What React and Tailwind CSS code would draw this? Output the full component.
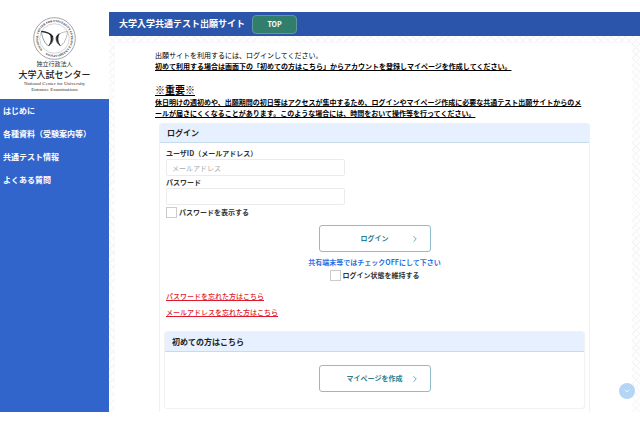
import React, { useState } from 'react';
import { ChevronDown, ChevronRight } from 'lucide-react';

const navItems = ['はじめに', '各種資料（受験案内等）', '共通テスト情報', 'よくある質問'];

const Emblem = () => (
  <svg viewBox="0 0 128 128" className="w-[43px] h-[43px]" role="img" aria-label="大学入試センター">
    <defs>
      <path id="ring" d="M 29 98 A 49 49 0 1 1 30 99" />
    </defs>
    <circle cx="64" cy="64" r="62" fill="none" stroke="#777" strokeWidth="2" />
    <circle cx="64" cy="64" r="44" fill="none" stroke="#aaa" strokeWidth="1.5" />
    <text fontFamily="Liberation Serif, serif" fontSize="9" fontWeight="700" fill="#222">
      <textPath href="#ring">NATIONAL CENTER FOR UNIVERSITY ENTRANCE EXAMINATIONS</textPath>
    </text>
    <path d="M25 43 C42 45 56 52 60 63 C60 74 54 84 46 85 C36 82 27 62 25 43 Z" fill="none" stroke="#666" strokeWidth="2" />
    <path d="M25 43 C42 45 54 51 59 60" fill="none" stroke="#222" strokeWidth="4" />
    <path d="M50 50 C61 55 63 72 47 85 C55 74 56 62 50 50 Z" fill="#222" stroke="#222" strokeWidth="2" />
    <path d="M103 43 C86 45 72 52 68 63 C68 74 74 84 82 85 C92 82 101 62 103 43 Z" fill="none" stroke="#999" strokeWidth="2" />
    <path d="M78 50 C67 55 65 72 81 85 C73 74 72 62 78 50 Z" fill="#222" stroke="#222" strokeWidth="2" />
  </svg>
);

const Sidebar = () => (
  <aside className="w-[109px] shrink-0 flex flex-col">
    <div className="flex flex-col items-center h-[87px] pt-[5px] text-[#333]">
      <Emblem />
      <p className="text-[6px] leading-[8px]">独立行政法人</p>
      <p className="text-[9px] leading-[13px] font-medium text-[#222]">大学入試センター</p>
      <p className="font-['Liberation_Serif',serif] text-[5px] leading-[6px] text-center">
        National Center for University
        <br />
        Entrance Examinations
      </p>
    </div>
    <nav className="grow bg-[#3265cc] px-[3px]">
      {navItems.map((item) => (
        <a key={item} href="#" className="block text-[8px] leading-[23px] font-bold text-white">
          {item}
        </a>
      ))}
    </nav>
  </aside>
);

const CardHeading = ({ children }) => (
  <h2 className="h-5 rounded-t-[3px] border-b border-[#c8dbea] bg-[#e6f0fe] px-[7px] text-[8px] leading-[19px] font-bold text-[#222]">
    {children}
  </h2>
);

const ActionButton = ({ children }) => (
  <button
    type="button"
    className="relative mx-auto flex w-[112px] h-[27px] items-center justify-center rounded-[3px] border border-[#8fbccb] bg-white text-[7px] font-bold text-[#2b7f8c]"
  >
    {children}
    <ChevronRight className="absolute right-[10px] w-[10px] h-[10px] text-[#4d9aa5]" strokeWidth={2} />
  </button>
);

const inputStyle =
  'block w-[179px] h-[17px] rounded-[2px] border border-[#ebebeb] bg-white px-[5px] text-[7px] font-normal text-[#333] placeholder:text-[#aaa] outline-none';
const checkStyle = 'appearance-none w-[11px] h-[11px] border border-[#ccc] bg-white checked:bg-[#3265cc]';

const LoginCard = () => {
  const [showPassword, setShowPassword] = useState(false);

  return (
    <section className="ml-1 rounded-t-[3px] border-x border-[#f1f1f1] text-[7px] leading-[11px] font-bold text-[#333]">
      <CardHeading>ログイン</CardHeading>
      <div className="px-[6px] pt-[5px]">
        <label htmlFor="user-id" className="block">ユーザID（メールアドレス）</label>
        <input id="user-id" type="text" placeholder="メールアドレス" className={inputStyle} />
        <label htmlFor="password" className="block mt-px">パスワード</label>
        <input id="password" type={showPassword ? 'text' : 'password'} className={inputStyle} />
        <label className="mt-[2px] flex items-center gap-[2px]">
          <input
            type="checkbox"
            checked={showPassword}
            onChange={(e) => setShowPassword(e.target.checked)}
            className={checkStyle}
          />
          パスワードを表示する
        </label>
        <div className="mt-[7px]">
          <ActionButton>ログイン</ActionButton>
        </div>
        <p className="mt-[5px] text-center text-[#1f72e6]">共有端末等ではチェックOFFにして下さい</p>
        <label className="mt-[2px] flex items-center justify-center gap-[2px]">
          <input type="checkbox" className={checkStyle} />
          ログイン状態を維持する
        </label>
        <div className="mt-[7px] flex flex-col items-start text-[#e0192d] font-medium leading-4">
          <a href="#" className="underline">パスワードを忘れた方はこちら</a>
          <a href="#" className="underline">メールアドレスを忘れた方はこちら</a>
        </div>
      </div>
      <div className="px-1 pt-[11px] pb-[3px]">
        <div className="rounded-[3px] border border-[#f1f1f1] pb-4">
          <CardHeading>初めての方はこちら</CardHeading>
          <div className="pt-[13px]">
            <ActionButton>マイページを作成</ActionButton>
          </div>
        </div>
      </div>
    </section>
  );
};

export default function App() {
  return (
    <div
      lang="ja"
      className="flex items-stretch bg-white pt-3 pb-3 font-['Noto_Sans_CJK_JP','Liberation_Sans',sans-serif] text-black"
    >
      <Sidebar />
      <div className="grow flex flex-col bg-[#fefefe] bg-[repeating-linear-gradient(45deg,#f6f6f6_0px,#f6f6f6_1px,transparent_1px,transparent_5px),repeating-linear-gradient(-45deg,#f6f6f6_0px,#f6f6f6_1px,transparent_1px,transparent_5px)]">
        <header className="flex h-6 items-center gap-[7px] bg-[#2b55aa] pl-[10px]">
          <h1 className="text-[9px] leading-4 font-bold text-white">大学入学共通テスト出願サイト</h1>
          <button type="button" className="w-[45px] h-[19px] rounded-[4px] border border-[#5a9a9a] bg-[#327e6c] text-[7px] font-bold text-white">
            TOP
          </button>
        </header>
        <main className="relative grow mt-[7px] ml-[6px] mr-[8px] bg-white pt-[7px] pl-10 pr-[42px]">
          <div className="pr-1 text-[7px] leading-[11px]">
            <p>出願サイトを利用するには、ログインしてください。</p>
            <p className="font-bold underline">
              初めて利用する場合は画面下の「初めての方はこちら」からアカウントを登録しマイページを作成してください。
            </p>
            <p className="mt-[10px] text-[10px] leading-[15px] font-bold underline">※重要※</p>
            <p className="font-bold underline">
              休日明けの週初めや、出願期間の初日等はアクセスが集中するため、ログインやマイページ作成に必要な共通テスト出願サイトからのメ
              <wbr />
              ールが届きにくくなることがあります。このような場合には、時間をおいて操作等を行ってください。
            </p>
          </div>
          <div className="mt-1">
            <LoginCard />
          </div>
          <button
            type="button"
            aria-label="ページの下へ"
            className="absolute -right-[3px] bottom-[13px] flex size-4 items-center justify-center rounded-full bg-[#b5d5f7] text-[#e8f3ff]"
          >
            <ChevronDown className="w-2 h-2" strokeWidth={3} />
          </button>
        </main>
      </div>
    </div>
  );
}
